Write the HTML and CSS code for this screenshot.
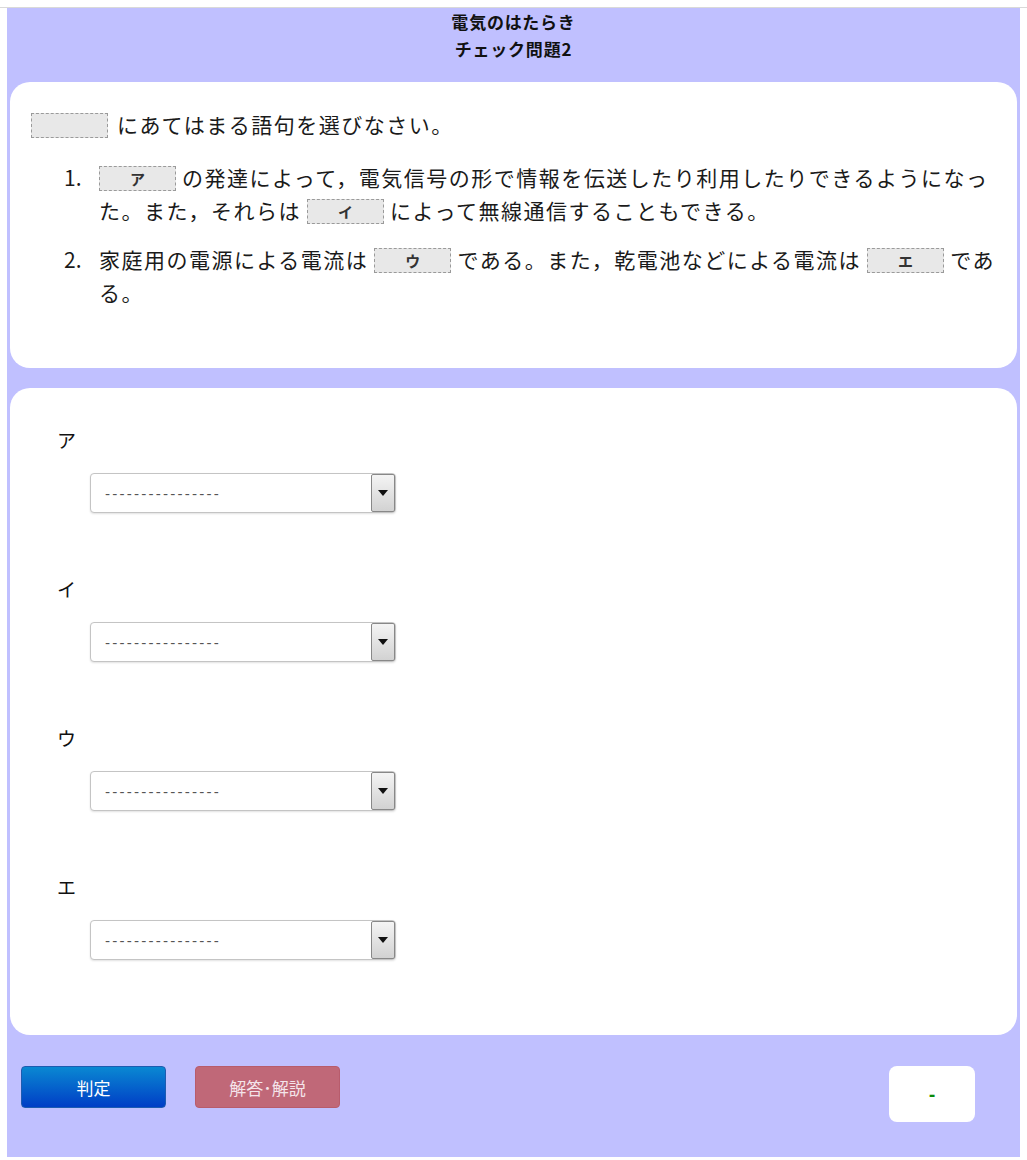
FILE: index.html
```html
<!DOCTYPE html>
<html lang="ja">
<head>
<meta charset="utf-8">
<title>チェック問題2</title>
<link rel="stylesheet" href="styles.css">
</head>
<body>
<div class="topline"></div>
<div class="page">
  <header class="head">
    <div class="head-line">電気のはたらき</div>
    <div class="head-line">チェック問題2</div>
  </header>

  <section class="panel question">
    <p class="intro"><span class="blank lead"></span><span>にあてはまる語句を選びなさい。</span></p>
    <div class="items">
      <div class="item">
        <span class="num">1.</span>
        <span class="txt"><span class="blank lead">ア</span><span>の発達によって，電気信号の形で情報を伝送したり利用したりできるようになっ</span><span>た。また，それらは</span><span class="blank">イ</span><span>によって無線通信することもできる。</span></span>
      </div>
      <div class="item">
        <span class="num">2.</span>
        <span class="txt"><span>家庭用の電源による電流は</span><span class="blank">ウ</span><span>である。また，乾電池などによる電流は</span><span class="blank">エ</span><span>であ</span><span>る。</span></span>
      </div>
    </div>
  </section>

  <section class="panel answers">
    <div class="group">
      <div class="label">ア</div>
      <div class="select"><span class="sel-text">----------------</span><span class="sel-btn"><span class="tri"></span></span></div>
    </div>
    <div class="group">
      <div class="label">イ</div>
      <div class="select"><span class="sel-text">----------------</span><span class="sel-btn"><span class="tri"></span></span></div>
    </div>
    <div class="group">
      <div class="label">ウ</div>
      <div class="select"><span class="sel-text">----------------</span><span class="sel-btn"><span class="tri"></span></span></div>
    </div>
    <div class="group">
      <div class="label">エ</div>
      <div class="select"><span class="sel-text">----------------</span><span class="sel-btn"><span class="tri"></span></span></div>
    </div>
  </section>

  <footer class="foot">
    <button class="btn btn-judge">判定</button>
    <button class="btn btn-answer">解答･解説</button>
    <div class="spacer"></div>
    <div class="result">-</div>
  </footer>
</div>
</body>
</html>
```
FILE: styles.css
```css
html, body {
  margin: 0;
  padding: 0;
  background: #ffffff;
  font-family: "Noto Sans CJK JP", "Noto Sans", sans-serif;
  color: #222;
}

.topline {
  height: 7px;
  border-bottom: 1px solid #d9d9d9;
  background: #ffffff;
}

.page {
  width: 1013px;
  margin-left: 7px;
  background: #c0c0ff;
  height: 1149px;
  box-sizing: border-box;
  padding: 0 3px;
}

.head {
  height: 74px;
  box-sizing: border-box;
  text-align: center;
}

.head-line {
  font-size: 17px;
  font-weight: bold;
  letter-spacing: 0.8px;
  line-height: 27px;
  color: #111;
}

.panel {
  background: #ffffff;
  border-radius: 20px;
}

.question {
  height: 286px;
  box-sizing: border-box;
  padding: 26px 12px 0 21px;
  font-size: 21px;
  letter-spacing: 1.5px;
  color: #1a1a1a;
}

.intro {
  margin: 0;
  line-height: 33px;
}

.blank {
  display: inline-block;
  box-sizing: border-box;
  width: 77px;
  height: 25px;
  margin: 0 6px;
  border: 1px dashed #9a9a9a;
  background: #e8e8e8;
  vertical-align: middle;
  text-align: center;
  font-size: 15px;
  font-weight: bold;
  line-height: 23px;
  letter-spacing: 0;
  color: #333;
  position: relative;
  top: -2px;
}

.intro .blank {
  margin-right: 9px;
}

.blank.lead {
  margin-left: 0;
}

.items {
  margin-top: 20px;
}

.item {
  display: flex;
  line-height: 33px;
  margin-bottom: 16px;
}

.num {
  flex: none;
  width: 35px;
  margin-left: 33px;
  letter-spacing: 0;
}

.txt {
  flex: 1;
}

.answers {
  margin-top: 20px;
  height: 647px;
  box-sizing: border-box;
  padding: 40px 20px 0 47px;
}

.group {
  margin-bottom: 64px;
}

.label {
  font-size: 19px;
  line-height: 24px;
  color: #111;
}

.select {
  margin: 21px 0 0 33px;
  width: 306px;
  height: 40px;
  box-sizing: border-box;
  border: 1px solid #c4c4c4;
  border-radius: 4px;
  box-shadow: 0 1px 2px rgba(0, 0, 0, 0.12);
  display: flex;
  align-items: center;
  justify-content: space-between;
  padding: 0 0 0 14px;
  background: #ffffff;
}

.sel-text {
  font-family: "DejaVu Sans", sans-serif;
  font-size: 14px;
  letter-spacing: 2.2px;
  color: #555;
  padding-top: 2px;
}

.sel-btn {
  width: 24px;
  height: 38px;
  box-sizing: border-box;
  border: 1px solid #888;
  border-radius: 2px;
  background: linear-gradient(#f4f4f4, #d2d2d2);
  display: flex;
  align-items: center;
  justify-content: center;
}

.tri {
  width: 0;
  height: 0;
  border-left: 5px solid transparent;
  border-right: 5px solid transparent;
  border-top: 6px solid #111;
}

.foot {
  display: flex;
  align-items: flex-start;
  padding: 31px 42px 0 11px;
}

.btn {
  width: 145px;
  height: 42px;
  border-radius: 4px;
  font-family: "Noto Sans CJK JP", sans-serif;
  font-size: 17px;
  color: #ffffff;
  padding: 0;
  cursor: pointer;
}

.btn-judge {
  background: linear-gradient(#0a88d2, #003ec6);
  border: 1px solid #1e5cb0;
}

.btn-answer {
  margin-left: 29px;
  background: #c06878;
  border: 1px solid #b85c6c;
  color: #f4e4ea;
}

.spacer {
  flex: 1;
}

.result {
  width: 86px;
  height: 56px;
  background: #ffffff;
  border-radius: 8px;
  display: flex;
  align-items: center;
  justify-content: center;
  color: #0a8a0a;
  font-size: 16px;
  font-weight: bold;
  font-family: "DejaVu Sans", sans-serif;
}
```
